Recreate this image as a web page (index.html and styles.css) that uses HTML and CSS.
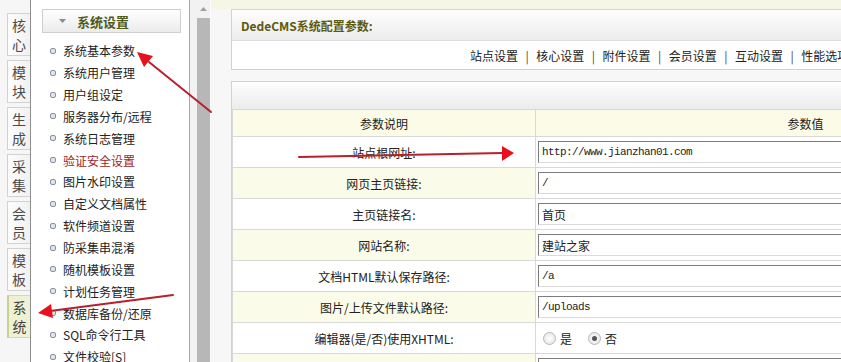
FILE: index.html
```html
<!DOCTYPE html>
<html lang="zh-CN">
<head>
  <meta charset="UTF-8" />
  <title>DedeCMS系统配置参数</title>
  <link rel="stylesheet" href="styles.css">
</head>
<body>
  <div class="frame">
    <div class="tabs">
      <div class="tab"><span>核</span><span>心</span></div>
      <div class="tab"><span>模</span><span>块</span></div>
      <div class="tab"><span>生</span><span>成</span></div>
      <div class="tab"><span>采</span><span>集</span></div>
      <div class="tab"><span>会</span><span>员</span></div>
      <div class="tab"><span>模</span><span>板</span></div>
      <div class="tab active"><span>系</span><span>统</span></div>
    </div>

    <div class="menu">
      <div class="menu-head">
        <svg class="caret" width="7" height="4" viewBox="0 0 7 4"><path d="M0 0h7L3.5 4z" fill="#8a8a8a"/></svg>
        <span>系统设置</span>
      </div>
      <ul class="menu-list">
        <li><i class="dot"></i>系统基本参数</li>
        <li><i class="dot"></i>系统用户管理</li>
        <li><i class="dot"></i>用户组设定</li>
        <li><i class="dot"></i>服务器分布/远程</li>
        <li><i class="dot"></i>系统日志管理</li>
        <li class="hot"><i class="dot"></i>验证安全设置</li>
        <li><i class="dot"></i>图片水印设置</li>
        <li><i class="dot"></i>自定义文档属性</li>
        <li><i class="dot"></i>软件频道设置</li>
        <li><i class="dot"></i>防采集串混淆</li>
        <li><i class="dot"></i>随机模板设置</li>
        <li><i class="dot"></i>计划任务管理</li>
        <li><i class="dot"></i>数据库备份/还原</li>
        <li><i class="dot"></i>SQL命令行工具</li>
        <li><i class="dot"></i>文件校验[S]</li>
      </ul>
    </div>

    <div class="scroll">
      <div class="up"><svg width="7" height="4" viewBox="0 0 7 4"><path d="M0 4h7L3.5 0z" fill="#a0a0a0"/></svg></div>
      <div class="thumb"></div>
    </div>

    <div class="main">
      <div class="box">
        <div class="box-head">DedeCMS系统配置参数:</div>
        <div class="nav">
          <span>站点设置</span><span class="sep">|</span>
          <span>核心设置</span><span class="sep">|</span>
          <span>附件设置</span><span class="sep">|</span>
          <span>会员设置</span><span class="sep">|</span>
          <span>互动设置</span><span class="sep">|</span>
          <span>性能选项</span>
        </div>
      </div>

      <div class="box second">
        <div class="box-head"></div>
        <table class="params">
          <thead>
            <tr><th class="col-name">参数说明</th><th>参数值</th></tr>
          </thead>
          <tbody>
            <tr><td class="col-name">站点根网址:</td><td><div class="field mono">http://www.jianzhan01.com</div></td></tr>
            <tr><td class="col-name">网页主页链接:</td><td><div class="field mono">/</div></td></tr>
            <tr><td class="col-name">主页链接名:</td><td><div class="field">首页</div></td></tr>
            <tr><td class="col-name">网站名称:</td><td><div class="field">建站之家</div></td></tr>
            <tr><td class="col-name">文档HTML默认保存路径:</td><td><div class="field mono">/a</div></td></tr>
            <tr><td class="col-name">图片/上传文件默认路径:</td><td><div class="field mono">/uploads</div></td></tr>
            <tr><td class="col-name">编辑器(是/否)使用XHTML:</td><td>
              <div class="radios">
                <span class="radio"></span>是
                <span class="radio on"></span>否
              </div>
            </td></tr>
            <tr><td class="col-name">模板默认风格:</td><td><div class="field mono">default</div></td></tr>
          </tbody>
        </table>
      </div>
    </div>

    <svg class="marks" width="841" height="362" viewBox="0 0 841 362">
      <g stroke="#b8202c" stroke-width="2" stroke-linecap="round">
        <line x1="211" y1="112" x2="149" y2="62"/>
        <line x1="299" y1="157" x2="503" y2="153"/>
        <line x1="173" y1="295" x2="50" y2="311"/>
      </g>
      <g fill="#e8101c">
        <polygon points="137,52 153,56 144,67"/>
        <polygon points="514,153 502,146 502,161"/>
        <polygon points="38,313 53,318 51,304"/>
      </g>
    </svg>
  </div>
</body>
</html>
```

FILE: styles.css
```css
body {
  margin: 0;
  font-family: "Noto Sans CJK SC", sans-serif;
  font-size: 12px;
  color: #222;
  background: #fff;
  overflow: hidden;
}
.frame {
  display: flex;
  height: 362px;
  position: relative;
  overflow: hidden;
}

/* left vertical tabs */
.tabs {
  width: 30px;
  flex: none;
  background: #f6f6f6;
  border-right: 1px solid #8e8e8e;
  padding-top: 13px;
  display: flex;
  flex-direction: column;
  align-items: flex-end;
  gap: 4px;
}
.tab {
  width: 23px;
  height: 43px;
  box-sizing: border-box;
  border: 1px solid #d2d2d2;
  border-right: none;
  background: linear-gradient(to right, #fdfdfd, #f1f1f1);
  color: #4a4a4a;
  font-size: 14px;
  line-height: 19px;
  display: flex;
  flex-direction: column;
  align-items: center;
  justify-content: center;
}
.tab.active {
  background: #eef1d4;
  border-left: 2px solid #c9d190;
  color: #444;
}

/* menu column */
.menu {
  width: 158px;
  flex: none;
  background: #fff;
  border-right: 1px solid #a9a9a9;
  padding-top: 9px;
}
.menu-head {
  margin: 0 8px 0 11px;
  height: 24px;
  box-sizing: border-box;
  border: 1px solid #cfcfcf;
  background: linear-gradient(#ffffff, #ebebeb);
  display: flex;
  align-items: center;
  padding-left: 16px;
  gap: 11px;
  color: #4f5a1c;
  font-weight: bold;
  font-size: 13px;
}
.menu-list {
  list-style: none;
  margin: 7px 0 0;
  padding: 0 0 0 19px;
}
.menu-list li {
  height: 21.85px;
  display: flex;
  align-items: center;
  gap: 7px;
  white-space: nowrap;
  color: #222;
}
.menu-list li.hot {
  color: #9c1c24;
}
.dot {
  width: 6px;
  height: 6px;
  box-sizing: border-box;
  border: 1px solid #8791a6;
  border-radius: 2px;
  background: #dfe3ea;
  flex: none;
}

/* scrollbar */
.scroll {
  width: 20px;
  flex: none;
  background: #f2f2f2;
  padding-left: 7px;
  box-sizing: border-box;
  display: flex;
  flex-direction: column;
}
.up {
  height: 18px;
  display: flex;
  align-items: center;
  justify-content: center;
}
.thumb {
  flex: 1;
  background: #b7b7b7;
}

/* content */
.main {
  flex: 1;
  min-width: 0;
  overflow: hidden;
  background: linear-gradient(#f6f6e6 0, #f6f6e6 9px, #f7f7f7 9px);
  padding: 9px 0 0 20px;
  border-left: 1px solid #fcfcfc;
}
.box {
  width: 844px;
  border: 1px solid #d2d2d2;
  border-top-color: #d4d4e6;
  background: #fff;
}
.box.second {
  margin-top: 11px;
  border-top-color: #d2d2d2;
}
.box-head {
  height: 31px;
  box-sizing: border-box;
  border-bottom: 1px solid #dedede;
  background: linear-gradient(#fefefe, #ececec);
  padding-left: 9px;
  display: flex;
  align-items: center;
  color: #5a5a12;
  font-weight: bold;
}
.second .box-head {
  height: 27px;
  border-bottom: none;
}
.nav {
  height: 28px;
  display: flex;
  align-items: center;
  padding-left: 238px;
  color: #222;
  white-space: nowrap;
}
.sep {
  margin: 0 7.5px;
  color: #444;
}

.params {
  width: 100%;
  border-collapse: collapse;
}
.params th,
.params td {
  border: 1px solid #d8d8d8;
  font-weight: normal;
  padding: 0;
}
.params th {
  height: 26px;
  background: #fbfbe7;
  text-align: center;
}
.params td {
  height: 30px;
  background: #fff;
  padding-left: 2px;
}
.params td.col-name {
  width: 302px;
  text-align: center;
  padding-left: 0;
}
.params tbody tr:nth-child(even) td.col-name {
  background: #fbfbe9;
}
.field {
  width: 420px;
  height: 22px;
  box-sizing: border-box;
  border: 1px solid;
  border-color: #7c7c7c #dadada #dadada #7c7c7c;
  background: #fff;
  padding-left: 3px;
  display: flex;
  align-items: center;
  white-space: nowrap;
}
.mono {
  font-family: "Liberation Mono", monospace;
  font-size: 11px;
  letter-spacing: -0.6px;
}
.radios {
  display: flex;
  align-items: center;
  padding-left: 5px;
  gap: 4px;
}
.radio {
  width: 11px;
  height: 11px;
  border-radius: 50%;
  border: 1px solid #b8b8b8;
  background: radial-gradient(#fff, #e0e0e0);
  display: inline-flex;
  align-items: center;
  justify-content: center;
}
.radio.on {
  margin-left: 12px;
}
.radio.on::after {
  content: "";
  width: 5px;
  height: 5px;
  border-radius: 50%;
  background: #555;
}

.marks {
  position: absolute;
  left: 0;
  top: 0;
  pointer-events: none;
}
```
